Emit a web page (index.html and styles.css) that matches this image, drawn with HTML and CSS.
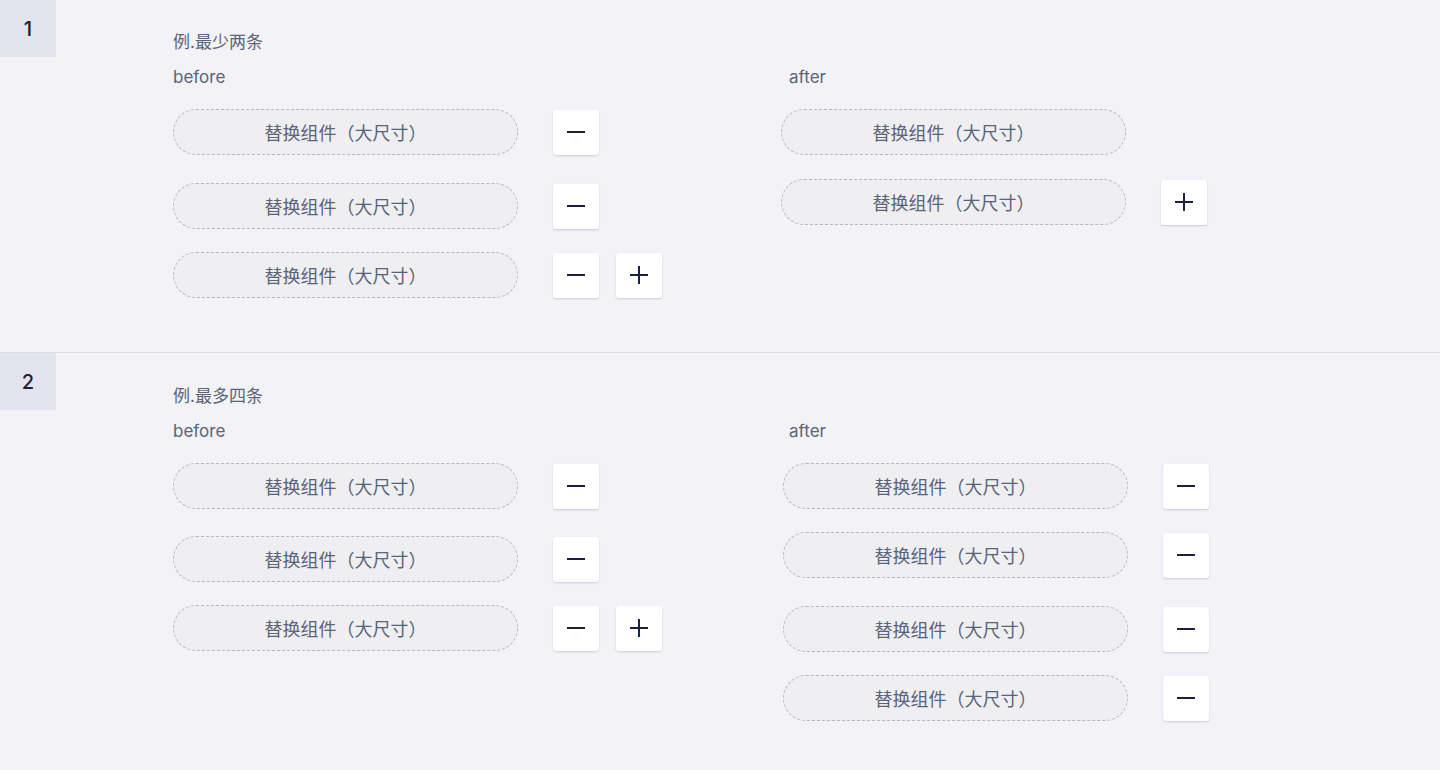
FILE: index.html
```html
<!DOCTYPE html>
<html lang="zh-CN">
<head>
<meta charset="utf-8">
<title>组件示例</title>
<link rel="stylesheet" href="styles.css">
</head>
<body>
<section class="section">
  <div class="num">1</div>
  <div class="content">
    <div class="title">例.最少两条</div>
    <div class="cols">
      <div class="col col-before">
        <div class="label">before</div>
        <div class="rows">
          <div class="row"><div class="pill">替换组件（大尺寸）</div><div class="btns"><span class="btn minus"></span></div></div>
          <div class="row wide"><div class="pill">替换组件（大尺寸）</div><div class="btns"><span class="btn minus"></span></div></div>
          <div class="row"><div class="pill">替换组件（大尺寸）</div><div class="btns"><span class="btn minus"></span><span class="btn plus"></span></div></div>
        </div>
      </div>
      <div class="col col-after">
        <div class="label">after</div>
        <div class="rows shift">
          <div class="row"><div class="pill">替换组件（大尺寸）</div></div>
          <div class="row tight"><div class="pill">替换组件（大尺寸）</div><div class="btns"><span class="btn plus"></span></div></div>
        </div>
      </div>
    </div>
  </div>
</section>
<section class="section last">
  <div class="num">2</div>
  <div class="content second">
    <div class="title">例.最多四条</div>
    <div class="cols">
      <div class="col col-before">
        <div class="label">before</div>
        <div class="rows">
          <div class="row"><div class="pill">替换组件（大尺寸）</div><div class="btns"><span class="btn minus"></span></div></div>
          <div class="row mid"><div class="pill">替换组件（大尺寸）</div><div class="btns"><span class="btn minus"></span></div></div>
          <div class="row"><div class="pill">替换组件（大尺寸）</div><div class="btns"><span class="btn minus"></span><span class="btn plus"></span></div></div>
        </div>
      </div>
      <div class="col col-after">
        <div class="label">after</div>
        <div class="rows">
          <div class="row"><div class="pill">替换组件（大尺寸）</div><div class="btns"><span class="btn minus"></span></div></div>
          <div class="row"><div class="pill">替换组件（大尺寸）</div><div class="btns"><span class="btn minus"></span></div></div>
          <div class="row wide"><div class="pill">替换组件（大尺寸）</div><div class="btns"><span class="btn minus"></span></div></div>
          <div class="row"><div class="pill">替换组件（大尺寸）</div><div class="btns"><span class="btn minus"></span></div></div>
        </div>
      </div>
    </div>
  </div>
</section>
</body>
</html>
```

FILE: styles.css
```css
html, body {
  margin: 0;
  padding: 0;
  background: #f2f2f7;
}
body {
  font-family: "Inter", "Noto Sans CJK SC", sans-serif;
  color: #5b6478;
}
.section {
  display: flex;
  align-items: flex-start;
  border-bottom: 1px solid #dcdce3;
  padding-bottom: 54px;
}
.section.last {
  border-bottom: none;
}
.num {
  width: 56px;
  height: 57px;
  flex-shrink: 0;
  background: #e3e4ed;
  display: flex;
  align-items: center;
  justify-content: center;
  font-size: 20px;
  font-weight: 500;
  color: #1b2136;
}
.content {
  padding: 30px 0 0 117px;
}
.content.second {
  padding-top: 31px;
}
.title {
  font-size: 17px;
  line-height: 24px;
  height: 24px;
}
.cols {
  display: flex;
  margin-top: 11px;
}
.col-before {
  width: 610px;
}
.label {
  font-size: 17px;
  line-height: 24px;
  height: 24px;
}
.col-after .label {
  padding-left: 6px;
}
.rows {
  display: flex;
  flex-direction: column;
  gap: 23px;
  margin-top: 20px;
}
.rows.shift {
  margin-left: -2px;
}
.row {
  display: flex;
  align-items: center;
  gap: 35px;
}
.row.wide {
  margin-top: 5px;
}
.row.mid {
  margin-top: 4px;
}
.row.tight {
  margin-top: 1px;
}
.pill {
  box-sizing: border-box;
  width: 345px;
  height: 46px;
  border: 1px dashed #b7b7c0;
  border-radius: 23px;
  background: #efeff1;
  display: flex;
  align-items: center;
  justify-content: center;
  font-size: 18px;
  color: #59637a;
}
.btns {
  display: flex;
  gap: 17px;
}
.btn {
  position: relative;
  display: block;
  width: 46px;
  height: 45px;
  background: #ffffff;
  border-radius: 3px;
  box-shadow: 0 1px 2px rgba(30, 35, 70, 0.18);
}
.btn::before,
.btn::after {
  content: "";
  position: absolute;
  background: #1b2140;
}
.btn::before {
  left: 14px;
  top: 21px;
  width: 18px;
  height: 2px;
}
.btn.minus::after {
  display: none;
}
.btn.plus::after {
  left: 22px;
  top: 13px;
  width: 2px;
  height: 18px;
}
```
